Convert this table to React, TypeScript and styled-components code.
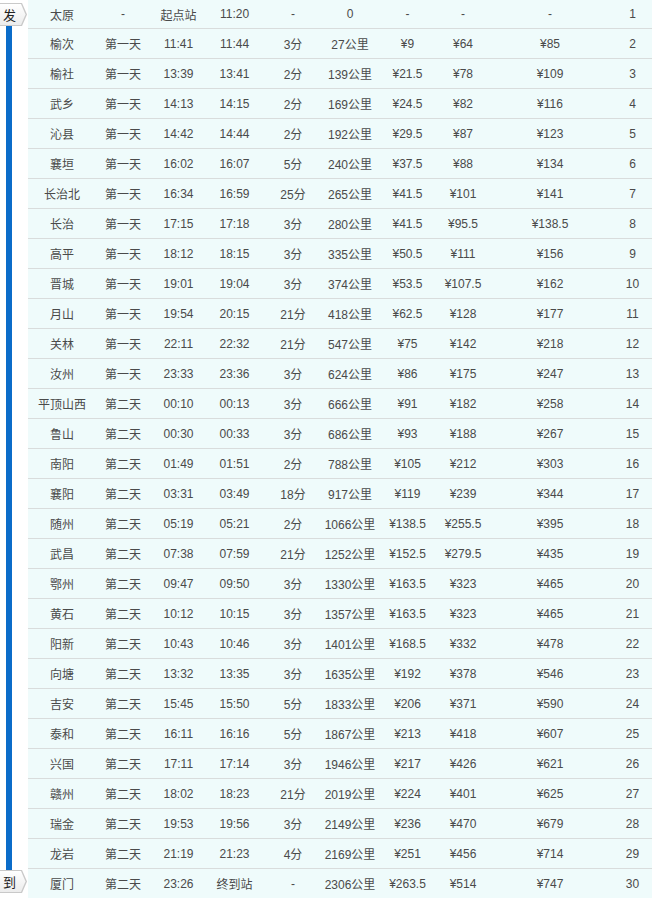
import styled, { createGlobalStyle } from 'styled-components';

const GlobalStyle = createGlobalStyle`
  html, body {
    margin: 0;
    padding: 0;
    background: #ffffff;
  }
  body {
    font-family: 'Liberation Sans', Arial, 'Noto Sans CJK SC', sans-serif;
    font-size: 12px;
    color: #4a4a4a;
  }
`;

// column widths, tuned so each cell's centre lines up with the screenshot
const COLS = [68, 54, 57, 55, 62, 52, 63, 48, 126, 39];

const ROWS: string[][] = [
  ['太原', '-', '起点站', '11:20', '-', '0', '-', '-', '-', '1'],
  ['榆次', '第一天', '11:41', '11:44', '3分', '27公里', '¥9', '¥64', '¥85', '2'],
  ['榆社', '第一天', '13:39', '13:41', '2分', '139公里', '¥21.5', '¥78', '¥109', '3'],
  ['武乡', '第一天', '14:13', '14:15', '2分', '169公里', '¥24.5', '¥82', '¥116', '4'],
  ['沁县', '第一天', '14:42', '14:44', '2分', '192公里', '¥29.5', '¥87', '¥123', '5'],
  ['襄垣', '第一天', '16:02', '16:07', '5分', '240公里', '¥37.5', '¥88', '¥134', '6'],
  ['长治北', '第一天', '16:34', '16:59', '25分', '265公里', '¥41.5', '¥101', '¥141', '7'],
  ['长治', '第一天', '17:15', '17:18', '3分', '280公里', '¥41.5', '¥95.5', '¥138.5', '8'],
  ['高平', '第一天', '18:12', '18:15', '3分', '335公里', '¥50.5', '¥111', '¥156', '9'],
  ['晋城', '第一天', '19:01', '19:04', '3分', '374公里', '¥53.5', '¥107.5', '¥162', '10'],
  ['月山', '第一天', '19:54', '20:15', '21分', '418公里', '¥62.5', '¥128', '¥177', '11'],
  ['关林', '第一天', '22:11', '22:32', '21分', '547公里', '¥75', '¥142', '¥218', '12'],
  ['汝州', '第一天', '23:33', '23:36', '3分', '624公里', '¥86', '¥175', '¥247', '13'],
  ['平顶山西', '第二天', '00:10', '00:13', '3分', '666公里', '¥91', '¥182', '¥258', '14'],
  ['鲁山', '第二天', '00:30', '00:33', '3分', '686公里', '¥93', '¥188', '¥267', '15'],
  ['南阳', '第二天', '01:49', '01:51', '2分', '788公里', '¥105', '¥212', '¥303', '16'],
  ['襄阳', '第二天', '03:31', '03:49', '18分', '917公里', '¥119', '¥239', '¥344', '17'],
  ['随州', '第二天', '05:19', '05:21', '2分', '1066公里', '¥138.5', '¥255.5', '¥395', '18'],
  ['武昌', '第二天', '07:38', '07:59', '21分', '1252公里', '¥152.5', '¥279.5', '¥435', '19'],
  ['鄂州', '第二天', '09:47', '09:50', '3分', '1330公里', '¥163.5', '¥323', '¥465', '20'],
  ['黄石', '第二天', '10:12', '10:15', '3分', '1357公里', '¥163.5', '¥323', '¥465', '21'],
  ['阳新', '第二天', '10:43', '10:46', '3分', '1401公里', '¥168.5', '¥332', '¥478', '22'],
  ['向塘', '第二天', '13:32', '13:35', '3分', '1635公里', '¥192', '¥378', '¥546', '23'],
  ['吉安', '第二天', '15:45', '15:50', '5分', '1833公里', '¥206', '¥371', '¥590', '24'],
  ['泰和', '第二天', '16:11', '16:16', '5分', '1867公里', '¥213', '¥418', '¥607', '25'],
  ['兴国', '第二天', '17:11', '17:14', '3分', '1946公里', '¥217', '¥426', '¥621', '26'],
  ['赣州', '第二天', '18:02', '18:23', '21分', '2019公里', '¥224', '¥401', '¥625', '27'],
  ['瑞金', '第二天', '19:53', '19:56', '3分', '2149公里', '¥236', '¥470', '¥679', '28'],
  ['龙岩', '第二天', '21:19', '21:23', '4分', '2169公里', '¥251', '¥456', '¥714', '29'],
  ['厦门', '第二天', '23:26', '终到站', '-', '2306公里', '¥263.5', '¥514', '¥747', '30'],
];

const Page = styled.div`
  display: flex;
  width: 652px;
  height: 898px;
  overflow: hidden;
`;

const Rail = styled.div`
  width: 28px;
  flex: none;
  display: flex;
  flex-direction: column;
  padding-top: 3px;
  padding-bottom: 5px;
  box-sizing: border-box;
`;

const Line = styled.div`
  flex: 1;
  width: 6px;
  margin-left: 6px;
  background: #0b6cc9;
`;

const TagEdge = styled.div`
  width: 27px;
  height: 23px;
  flex: none;
  background: #c9c9c9;
  clip-path: polygon(0 0, 22px 0, 27px 50%, 22px 100%, 0 100%);
  display: flex;
  align-items: center;
`;

const TagFace = styled.div`
  width: 26px;
  height: 21px;
  background: linear-gradient(#ffffff, #ececec);
  clip-path: polygon(0 0, 21px 0, 25.5px 50%, 21px 100%, 0 100%);
  display: flex;
  align-items: center;
  padding-left: 3px;
  box-sizing: border-box;
  font-family: 'Noto Sans CJK SC', sans-serif;
  font-size: 13px;
  color: #222;
`;

const Table = styled.div`
  flex: 1;
  background: #effbfb;
`;

const Row = styled.div<{ $first?: boolean }>`
  display: flex;
  height: ${p => (p.$first ? 28 : 29)}px;
  border-bottom: 1px solid #d9dcdc;
`;

const Cell = styled.div<{ $w: number }>`
  width: ${p => p.$w}px;
  flex: none;
  display: flex;
  align-items: center;
  justify-content: center;
  white-space: nowrap;
  font-family: 'Liberation Sans', Arial, 'Noto Sans CJK SC', sans-serif;
`;

const Tag = ({ label }: { label: string }) => (
  <TagEdge>
    <TagFace>{label}</TagFace>
  </TagEdge>
);

export default function App() {
  return (
    <>
      <GlobalStyle />
      <Page>
        <Rail>
          <Tag label="发" />
          <Line />
          <Tag label="到" />
        </Rail>
        <Table>
          {ROWS.map((row, i) => (
            <Row key={i} $first={i === 0}>
              {row.map((text, j) => (
                <Cell key={j} $w={COLS[j]}>
                  {text}
                </Cell>
              ))}
            </Row>
          ))}
        </Table>
      </Page>
    </>
  );
}
